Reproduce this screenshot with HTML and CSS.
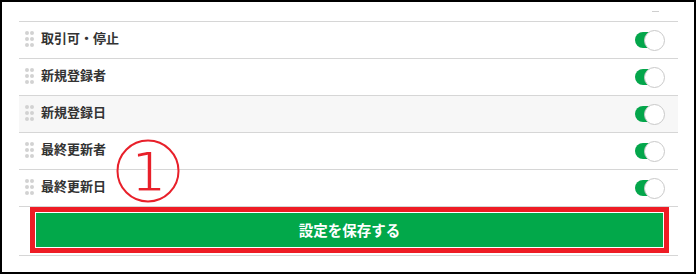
FILE: index.html
```html
<!DOCTYPE html>
<html lang="ja">
<head>
<meta charset="utf-8">
<link rel="stylesheet" href="styles.css">
</head>
<body>
<div class="frame">
  <div class="list">
    <div class="peek"><span class="dash"></span></div>
    <div class="row">
      <span class="handle"><i></i><i></i><i></i><i></i><i></i><i></i></span>
      <span class="label">取引可・停止</span>
      <span class="toggle"><span class="track"></span><span class="thumb"></span></span>
    </div>
    <div class="row">
      <span class="handle"><i></i><i></i><i></i><i></i><i></i><i></i></span>
      <span class="label">新規登録者</span>
      <span class="toggle"><span class="track"></span><span class="thumb"></span></span>
    </div>
    <div class="row hover">
      <span class="handle"><i></i><i></i><i></i><i></i><i></i><i></i></span>
      <span class="label">新規登録日</span>
      <span class="toggle"><span class="track"></span><span class="thumb"></span></span>
    </div>
    <div class="row">
      <span class="handle"><i></i><i></i><i></i><i></i><i></i><i></i></span>
      <span class="label">最終更新者</span>
      <span class="toggle"><span class="track"></span><span class="thumb"></span></span>
    </div>
    <div class="row">
      <span class="handle"><i></i><i></i><i></i><i></i><i></i><i></i></span>
      <span class="label">最終更新日</span>
      <span class="toggle"><span class="track"></span><span class="thumb"></span></span>
    </div>
    <div class="save-area">
      <div class="mark"><button class="save">設定を保存する</button></div>
    </div>
  </div>
  <svg class="anno" width="64" height="64" viewBox="0 0 64 64">
    <circle cx="32" cy="32" r="30.5" fill="none" stroke="#e8202a" stroke-width="2"/>
    <text x="32.5" y="52" text-anchor="middle" class="anno-num">1</text>
  </svg>
</div>
</body>
</html>
```
FILE: styles.css
```css
html, body {
  margin: 0;
  padding: 0;
  background: #fff;
}
.frame {
  position: relative;
  box-sizing: border-box;
  width: 696px;
  height: 274px;
  border: 2px solid #000;
  font-family: "Noto Sans CJK JP", "Noto Sans", sans-serif;
}
.list {
  margin-left: 17px;
  width: 659px;
}
.peek {
  height: 19px;
  box-sizing: border-box;
  padding: 9px 19px 0 0;
  display: flex;
  justify-content: flex-end;
}
.dash {
  width: 7px;
  height: 1px;
  background: #cfcfcf;
}
.row {
  display: flex;
  align-items: center;
  height: 36px;
  border-top: 1px solid #d6d6d6;
  padding: 0 13px 0 6px;
}
.row.hover {
  background: #f7f7f7;
}
.handle {
  display: grid;
  grid-template-columns: 4px 4px;
  grid-auto-rows: 4px;
  column-gap: 1px;
  row-gap: 2px;
  margin-right: 7px;
  margin-top: -2px;
}
.handle i {
  display: block;
  width: 4px;
  height: 4px;
  border-radius: 50%;
  background: #d2d2d2;
}
.label {
  flex: 1;
  font-size: 13px;
  line-height: 18px;
  margin-bottom: 5px;
  font-weight: bold;
  color: #333;
}
.toggle {
  position: relative;
  width: 30px;
  height: 21px;
}
.track {
  position: absolute;
  left: 0;
  top: 2.5px;
  width: 26px;
  height: 16px;
  border-radius: 8px;
  background: #04a64b;
}
.thumb {
  position: absolute;
  right: 0;
  top: 0;
  box-sizing: border-box;
  width: 21px;
  height: 21px;
  border-radius: 50%;
  background: #fff;
  border: 1px solid #c9c9c9;
}
.save-area {
  height: 48px;
  border-top: 1px solid #d6d6d6;
  border-bottom: 1px solid #d6d6d6;
  padding-left: 11px;
}
.mark {
  box-sizing: border-box;
  width: 639px;
  height: 46px;
  border: 5px solid #ee1c25;
  padding: 1px;
  background: #fff;
}
.save {
  display: block;
  width: 100%;
  height: 100%;
  margin: 0;
  border: 0;
  padding: 0 0 2px;
  background: #02a84a;
  color: #fff;
  font-family: "Noto Sans CJK JP", "Noto Sans", sans-serif;
  font-size: 14.5px;
  font-weight: bold;
}
.anno {
  position: absolute;
  left: 114px;
  top: 137px;
}
.anno-num {
  font-family: "DejaVu Sans", sans-serif;
  font-size: 56px;
  font-weight: normal;
  fill: #e8202a;
  stroke: #fff;
  stroke-width: 2px;
}
```
